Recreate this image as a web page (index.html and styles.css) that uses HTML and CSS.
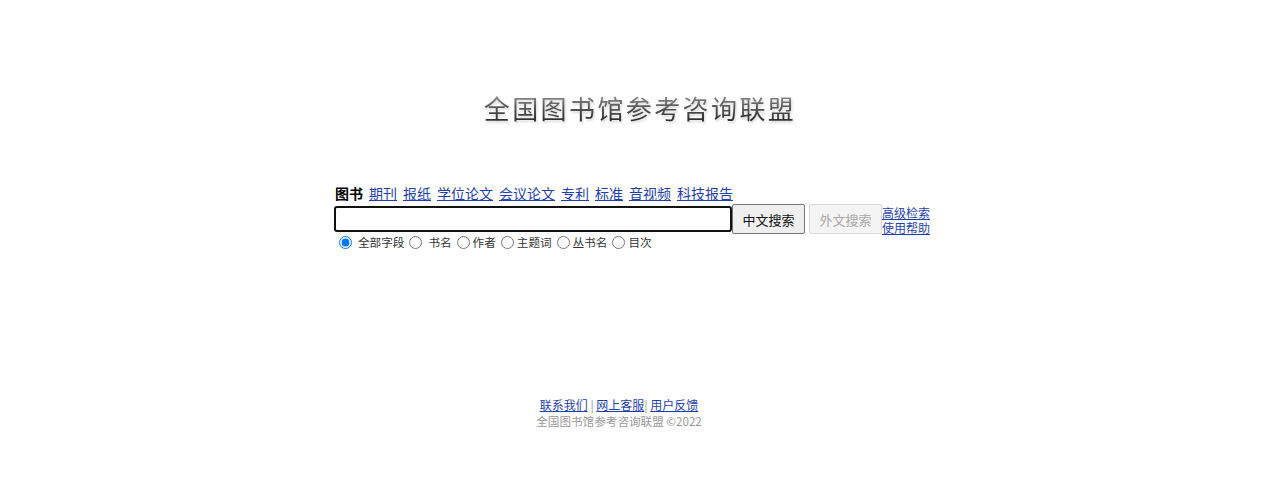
FILE: index.html
```html
<!DOCTYPE html>
<html lang="zh-CN">
<head>
<meta charset="utf-8">
<title>全国图书馆参考咨询联盟</title>
<link rel="stylesheet" href="styles.css">
</head>
<body>
<div class="page">
  <div class="logo"><span class="logo-text">全国图书馆参考咨询联盟</span></div>
  <div class="search">
    <div class="tabs">
      <span class="tab current">图书</span>
      <a class="tab" href="#">期刊</a>
      <a class="tab" href="#">报纸</a>
      <a class="tab" href="#">学位论文</a>
      <a class="tab" href="#">会议论文</a>
      <a class="tab" href="#">专利</a>
      <a class="tab" href="#">标准</a>
      <a class="tab" href="#">音视频</a>
      <a class="tab" href="#">科技报告</a>
    </div>
    <div class="row">
      <input class="query" type="text">
      <button class="btn">中文搜索</button>
      <button class="btn" disabled>外文搜索</button>
      <div class="side-links">
        <a href="#">高级检索</a>
        <a href="#">使用帮助</a>
      </div>
    </div>
    <div class="fields">
      <label><input type="radio" name="f" checked><span class="sp"></span>全部字段</label>
      <label><input type="radio" name="f"><span class="sp"></span>书名</label>
      <label><input type="radio" name="f">作者</label>
      <label><input type="radio" name="f">主题词</label>
      <label><input type="radio" name="f">丛书名</label>
      <label><input type="radio" name="f">目次</label>
    </div>
  </div>
  <div class="footer">
    <div class="foot-links"><a href="#">联系我们</a> | <a href="#">网上客服</a>| <a href="#">用户反馈</a></div>
    <div class="copy">全国图书馆参考咨询联盟 ©2022</div>
  </div>
</div>
</body>
</html>
```
FILE: styles.css
```css
html, body {
  margin: 0;
  padding: 0;
  background: #fff;
}
body {
  font-family: "Liberation Sans", "Noto Sans CJK SC", Arial, sans-serif;
  color: #000;
}
.page {
  width: 1280px;
  height: 480px;
}
.logo {
  padding-top: 90px;
  height: 36px;
  text-align: center;
}
.logo-text {
  display: inline-block;
  font-family: "Noto Sans CJK SC", sans-serif;
  font-size: 26px;
  line-height: 36px;
  letter-spacing: 2.4px;
  font-weight: 400;
  background: linear-gradient(to bottom, #a8a8a8 0%, #5a5a5a 45%, #1e1e1e 100%);
  -webkit-background-clip: text;
  background-clip: text;
  color: transparent;
  filter: drop-shadow(1px 2px 1px rgba(0,0,0,0.16));
}
.search {
  margin-top: 58px;
  margin-left: 334px;
  width: 600px;
}
.tabs {
  display: flex;
  align-items: baseline;
  gap: 6px;
  font-family: "Noto Sans CJK SC", sans-serif;
  font-size: 14px;
  line-height: 18px;
  padding-left: 1px;
}
.tab {
  color: #1f3fae;
  text-decoration: underline;
}
.tab.current {
  color: #000;
  font-weight: 700;
  text-decoration: none;
}
.row {
  display: flex;
  align-items: center;
  margin-top: 2px;
  height: 30px;
}
.query {
  box-sizing: border-box;
  width: 398px;
  height: 26px;
  border: 2px solid #111;
  border-radius: 3px;
  margin: 0;
  padding: 0 4px;
  outline: none;
}
.btn {
  box-sizing: border-box;
  height: 30px;
  width: 73px;
  padding: 0;
  margin: 0 4px 0 0;
  font-family: "Noto Sans CJK SC", sans-serif;
  font-size: 13px;
  color: #111;
  background: #efefef;
  border: 1px solid #767676;
  border-radius: 2px;
}
.btn:disabled {
  color: #a8a8a8;
  background: #f4f4f4;
  border-color: #d9d9d9;
  margin-right: 0;
}
.side-links {
  display: flex;
  flex-direction: column;
  font-family: "Noto Sans CJK SC", sans-serif;
  font-size: 12px;
  line-height: 15px;
  padding-top: 2px;
}
.side-links a {
  color: #1f3fae;
}
.fields {
  display: flex;
  align-items: center;
  font-family: "Noto Sans CJK SC", sans-serif;
  font-size: 11.6px;
  line-height: 14px;
  color: #333;
  margin-top: 1px;
}
.fields label {
  display: flex;
  align-items: center;
}
.fields input {
  width: 13px;
  height: 13px;
  margin: 0 3px 0 5px;
}
.sp {
  display: inline-block;
  width: 3px;
}
.footer {
  margin-top: 148px;
  text-align: center;
  padding-right: 42px;
  font-family: "Noto Sans CJK SC", sans-serif;
  font-size: 12px;
  line-height: 16px;
  color: #999;
}
.foot-links a {
  color: #1f3fae;
}
.copy {
  color: #999;
  font-size: 11.6px;
}
```
